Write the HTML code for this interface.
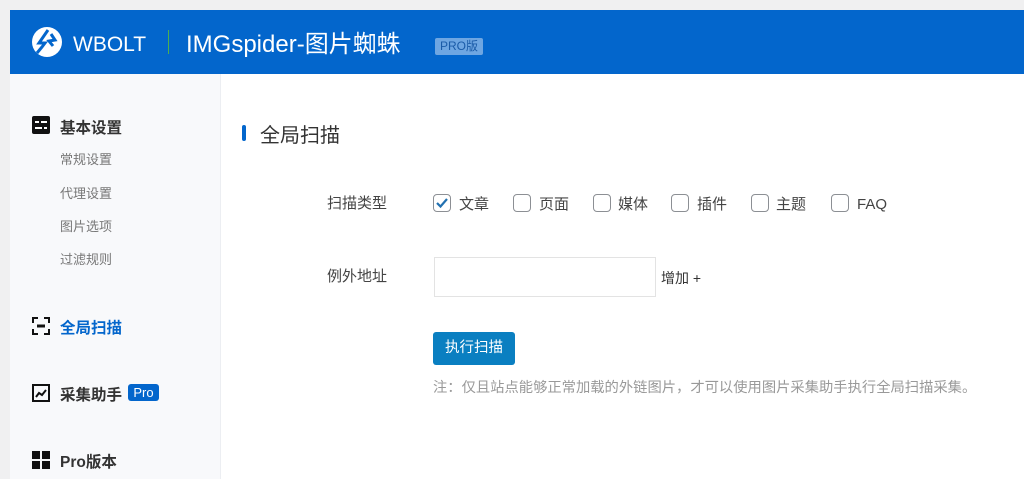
<!DOCTYPE html><html><head><meta charset="utf-8"><style>
body{margin:0;width:1024px;height:479px;background:#f0f0f1;font-family:"Liberation Sans","Noto Sans CJK SC",sans-serif;overflow:hidden;position:relative}
.hd{position:absolute;left:10px;top:10px;width:1014px;height:64px;background:#0366cc}
.side{position:absolute;left:10px;top:74px;width:210px;height:405px;background:#f8f9fb;border-right:1px solid #eceef2}
.main{position:absolute;left:221px;top:74px;right:0;height:405px;background:#fff}
.a{position:absolute;white-space:nowrap}
.grp{font-size:15.5px;font-weight:bold;color:#333}
.sub{font-size:13px;color:#777}
.cb{position:fixed;width:16px;height:16px;border:1px solid #8c8f94;border-radius:4px;background:#fff}
.lbl{font-size:15px;color:#444;line-height:20px}
</style></head><body>
<div class="hd">
<svg class="a" style="left:21px;top:16px" width="32" height="32" viewBox="0 0 32 32"><circle cx="16" cy="16" r="15" fill="#fff"/><path d="M17 4 L8 17 L14 17 L11 21 L6 27" stroke="#0366cc" stroke-width="3" fill="none"/><path d="M20 8 L24 14 L18 15 L22 20" stroke="#0366cc" stroke-width="3" fill="none"/></svg>
<div class="a" style="left:63px;top:21px;font-size:21px;line-height:28px;color:#fff">WBOLT</div>
<div class="a" style="left:158px;top:20px;width:1px;height:24px;background:#4caf50"></div>
<div class="a" style="left:176px;top:19px;font-size:24px;line-height:32px;color:#fff">IMGspider-图片蜘蛛</div>
<div class="a" style="left:425px;top:28px;width:48px;height:17px;background:#6ea6e2;border-radius:2px;color:#1a5ba8;font-size:12px;line-height:17px;text-align:center">PRO版</div>
</div>
<div class="side">
<svg class="a" style="left:22px;top:42px" width="18" height="18" viewBox="0 0 18 18"><rect width="18" height="18" rx="2" fill="#111"/><rect x="3" y="5" width="12" height="2" fill="#fff"/><rect x="3" y="11" width="12" height="2" fill="#fff"/><rect x="7" y="4" width="2" height="4" fill="#111"/><rect x="10" y="10" width="2" height="4" fill="#111"/></svg>
<div class="a grp" style="left:50px;top:42px">基本设置</div>
<div class="a sub" style="left:50px;top:75px">常规设置</div>
<div class="a sub" style="left:50px;top:109px">代理设置</div>
<div class="a sub" style="left:50px;top:142px">图片选项</div>
<div class="a sub" style="left:50px;top:175px">过滤规则</div>
<svg class="a" style="left:22px;top:243px" width="18" height="18" viewBox="0 0 18 18" fill="none" stroke="#111" stroke-width="2"><path d="M1 6V1h5M12 1h5v5M17 12v5h-5M6 17H1v-5"/><path d="M5 9h8" stroke-width="3"/></svg>
<div class="a grp" style="left:50px;top:242px;color:#0366cc">全局扫描</div>
<svg class="a" style="left:22px;top:310px" width="18" height="18" viewBox="0 0 18 18"><rect x="1" y="1" width="16" height="16" fill="none" stroke="#111" stroke-width="2"/><path d="M4 13l3-4 3 2 4-5" stroke="#111" stroke-width="2" fill="none"/></svg>
<div class="a grp" style="left:50px;top:309px">采集助手</div>
<div class="a" style="left:118px;top:310px;width:31px;height:17px;background:#0366cc;border-radius:3px;color:#fff;font-size:13px;line-height:17px;text-align:center">Pro</div>
<svg class="a" style="left:22px;top:377px" width="18" height="18" viewBox="0 0 18 18" fill="#111"><rect width="8" height="8"/><rect x="10" width="8" height="8"/><rect y="10" width="8" height="8"/><rect x="10" y="10" width="8" height="8"/></svg>
<div class="a grp" style="left:50px;top:376px">Pro版本</div>
</div>
<div class="main">
<div class="a" style="left:21px;top:51px;width:4px;height:16px;background:#0366cc;border-radius:2px"></div>
<div class="a" style="left:39px;top:49px;font-size:20px;line-height:26px;color:#333">全局扫描</div>
<div class="a lbl" style="left:106px;top:120px">扫描类型</div>
<div class="cb" style="left:433px;top:194px"></div>
<svg style="position:fixed;left:435px;top:196px" width="14" height="14" viewBox="0 0 14 14"><path d="M2 7l3.5 3.5L12 3" stroke="#2271b1" stroke-width="2.2" fill="none"/></svg>
<div class="a lbl" style="left:238px;top:121px">文章</div>
<div class="cb" style="left:513px;top:194px"></div><div class="a lbl" style="left:318px;top:121px">页面</div>
<div class="cb" style="left:593px;top:194px"></div><div class="a lbl" style="left:397px;top:121px">媒体</div>
<div class="cb" style="left:671px;top:194px"></div><div class="a lbl" style="left:476px;top:121px">插件</div>
<div class="cb" style="left:751px;top:194px"></div><div class="a lbl" style="left:555px;top:121px">主题</div>
<div class="cb" style="left:831px;top:194px"></div><div class="a lbl" style="left:636px;top:121px">FAQ</div>
<div class="a lbl" style="left:106px;top:193px">例外地址</div>
<div class="a" style="left:213px;top:183px;width:220px;height:38px;border:1px solid #e3e3e3;background:#fff"></div>
<div class="a" style="left:440px;top:194px;font-size:14px;line-height:20px;color:#333">增加 +</div>
<div class="a" style="left:212px;top:258px;width:82px;height:33px;background:#0a7fc1;border-radius:3px;color:#fff;font-size:14.5px;line-height:33px;text-align:center">执行扫描</div>
<div class="a" style="left:212px;top:304px;font-size:14.3px;line-height:20px;color:#999">注：仅且站点能够正常加载的外链图片，才可以使用图片采集助手执行全局扫描采集。</div>
</div>
</body></html>
